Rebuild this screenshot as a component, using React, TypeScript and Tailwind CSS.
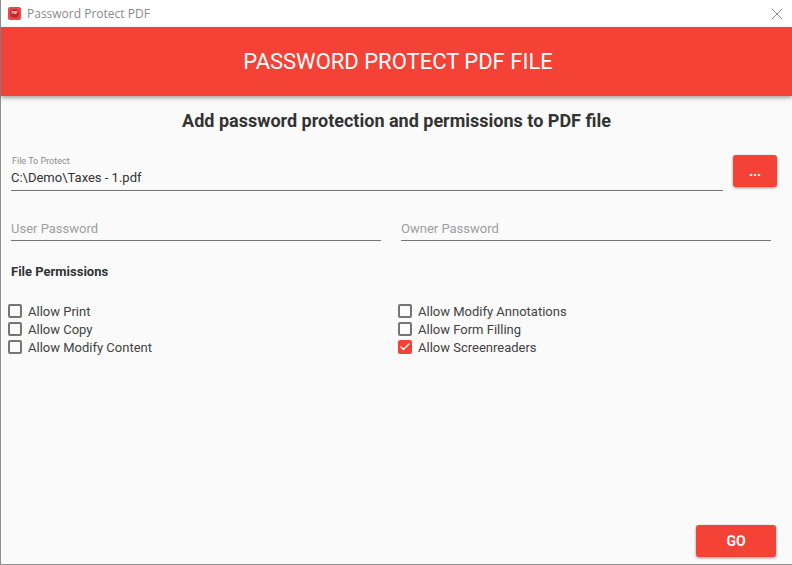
import { Check, X } from 'lucide-react'

const leftPerms = ['Allow Print', 'Allow Copy', 'Allow Modify Content']
const rightPerms = ['Allow Modify Annotations', 'Allow Form Filling', 'Allow Screenreaders']

function Perm({ label, checked = false }: { label: string; checked?: boolean }) {
  return (
    <div className="flex h-[18px] items-center">
      {checked ? (
        <span className="mb-[2px] flex h-[14px] w-[14px] items-center justify-center rounded-[2px] bg-[#f44336]">
          <Check size={12} strokeWidth={2.5} className="text-white" />
        </span>
      ) : (
        <span className="mb-[2px] h-[14px] w-[14px] rounded-[2px] border-2 border-[#757575]" />
      )}
      <span className="ml-[6px] text-[13px] text-[#424242]">{label}</span>
    </div>
  )
}

function PasswordField({ label }: { label: string }) {
  return (
    <div className="flex h-[30px] flex-1 items-center border-b border-[#757575] pt-[7px] text-[13px] text-[#9e9e9e]">
      {label}
    </div>
  )
}

export default function App() {
  return (
    <div className="flex h-[565px] w-[792px] flex-col overflow-hidden bg-white font-['Roboto',sans-serif]">
      <div className="flex h-[565px] w-[792px] flex-col border-b border-l border-[#8f8f8f] bg-[#fafafa]">
        <div className="flex h-[27px] shrink-0 items-center bg-white pl-[7px] pr-[5px]">
          <span className="flex h-[13px] w-[13px] items-center justify-center rounded-[2px] bg-[#ee4450]">
            <span className="flex h-[9px] w-[9px] items-center justify-center rounded-full bg-[#c62828] text-[3px] font-bold text-white">
              PDF
            </span>
          </span>
          <span className="ml-[6px] font-['Open_Sans',sans-serif] text-[12px] text-[#8a8a8a]">Password Protect PDF</span>
          <X size={20} strokeWidth={1} className="ml-auto text-[#777]" />
        </div>

        <div className="flex h-[69px] shrink-0 items-center justify-center bg-[#f44336] pl-[3px] text-[22px] text-white shadow-[0_2px_4px_rgba(0,0,0,0.35)]">
          PASSWORD PROTECT PDF FILE
        </div>

        <h1 className="mt-[13px] text-center text-[18px] leading-[24px] font-bold text-[#333]">
          Add password protection and permissions to PDF file
        </h1>

        <div className="mt-[22px] flex items-start pl-[10px] pr-[15px]">
          <div className="h-[36px] flex-1 border-b border-[#757575]">
            <div className="pl-[1px] pt-[1px] text-[9px] leading-[10px] text-[#8a8a8a]">File To Protect</div>
            <div className="mt-[2px] text-[13px] leading-[20px] text-[#333]">C:\Demo\Taxes - 1.pdf</div>
          </div>
          <button className="ml-[10px] flex h-[32px] w-[44px] items-center justify-center rounded-[3px] bg-[#f44336] text-[14px] font-bold text-white shadow-[0_1px_3px_rgba(0,0,0,0.4)]">
            ...
          </button>
        </div>

        <div className="mt-[20px] flex gap-[20px] pl-[10px] pr-[21px]">
          <PasswordField label="User Password" />
          <PasswordField label="Owner Password" />
        </div>

        <div className="mt-[23px] pl-[10px] text-[13px] leading-[16px] font-bold text-[#333]">File Permissions</div>

        <div className="mt-[23px] flex pl-[7px]">
          <div className="w-[390px]">
            {leftPerms.map((p) => (
              <Perm key={p} label={p} />
            ))}
          </div>
          <div>
            {rightPerms.map((p) => (
              <Perm key={p} label={p} checked={p === 'Allow Screenreaders'} />
            ))}
          </div>
        </div>

        <div className="mt-auto flex justify-end pb-[7px] pr-[16px]">
          <button className="flex h-[32px] w-[80px] items-center justify-center rounded-[3px] bg-[#f44336] text-[14px] font-bold text-white shadow-[0_1px_3px_rgba(0,0,0,0.4)]">
            GO
          </button>
        </div>
      </div>
    </div>
  )
}
